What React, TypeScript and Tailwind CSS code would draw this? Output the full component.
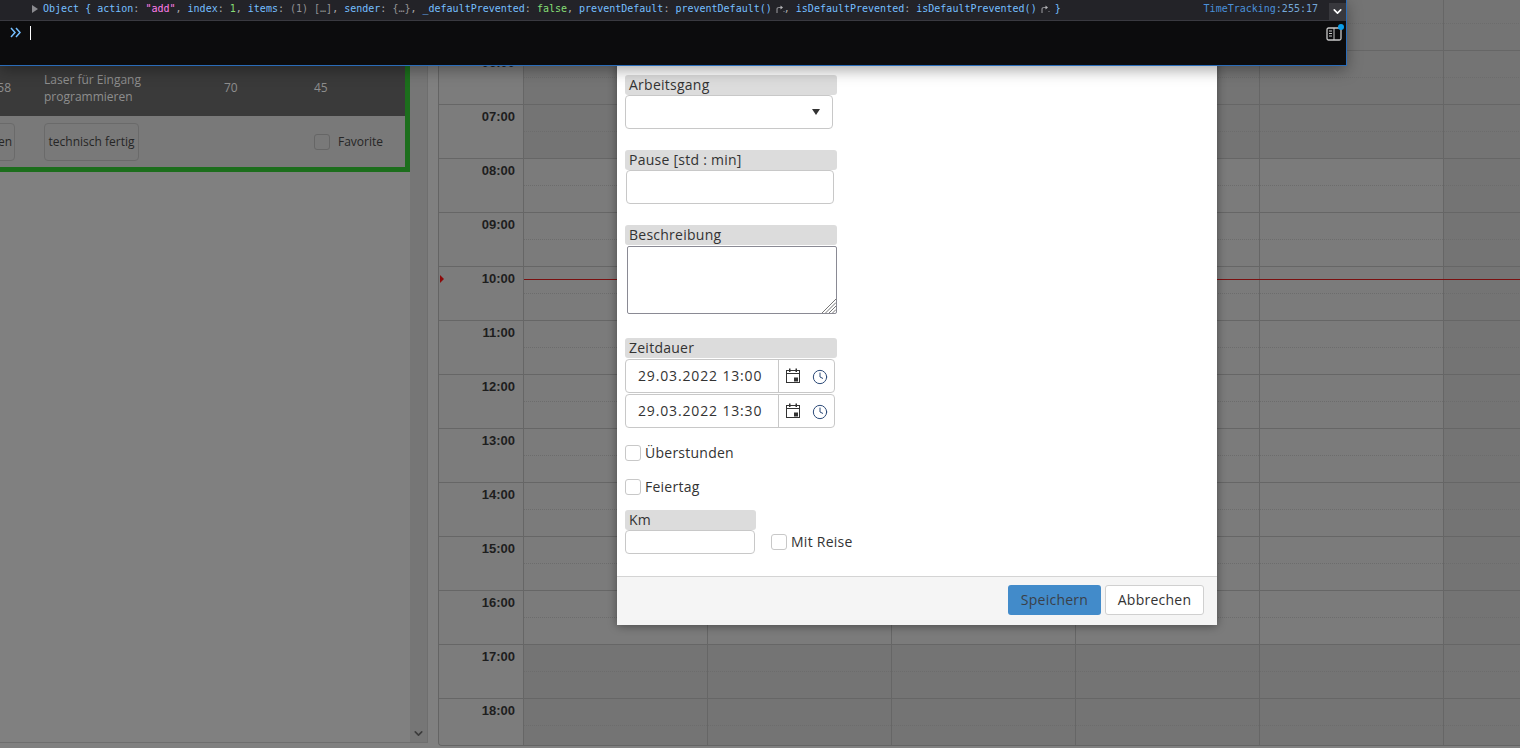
import React from 'react';
import { ChevronDown, Clock } from 'lucide-react';

const hours = ['05:00', '06:00', '07:00', '08:00', '09:00', '10:00', '11:00', '12:00', '13:00', '14:00', '15:00', '16:00', '17:00', '18:00'];
const days = [0, 1, 2, 3, 4, 5];

const labelFont = { fontFamily: '"Open Sans", sans-serif' };

function CalendarIcon() {
  return (
    <svg width="16" height="16" viewBox="0 0 16 16" fill="none" className="text-[#333]">
      <rect x="1.5" y="2.5" width="13" height="12" stroke="currentColor" />
      <path d="M1.5 5.5h13" stroke="currentColor" />
      <rect x="4" y="0.5" width="1.5" height="3.5" fill="currentColor" />
      <rect x="10.5" y="0.5" width="1.5" height="3.5" fill="currentColor" />
      <rect x="9" y="9.5" width="4" height="4" fill="currentColor" />
    </svg>
  );
}

// the little "jump to definition" arrow after functions in the console
function JumpArrow() {
  return (
    <svg width="9" height="9" viewBox="0 0 9 9" fill="none" className="-ml-[2px] -mr-px inline-block align-[-1px]">
      <path d="M1 9V5.5Q1 3.5 3 3.5H5" stroke="#8a8a8f" strokeWidth="1.2" />
      <path d="M4.5 1.5L7 3.5 4.5 5.5z" fill="#b5b5b8" />
      <path d="M8 7v1" stroke="#8a8a8f" />
    </svg>
  );
}

function FieldLabel({ children, width = 'w-[212px]' }: { children: React.ReactNode; width?: string }) {
  return (
    <div className={`${width} h-5 rounded-[3px] bg-[#dcdcdc] pl-1 text-sm leading-5 tracking-[0.25px] text-[#333]`}>
      {children}
    </div>
  );
}

function DateField({ value }: { value: string }) {
  return (
    <div className="flex h-[34px] w-[210px] items-center rounded border border-[#c8c8c8] bg-white">
      <div className="w-[152px] pl-3 text-sm tracking-[0.85px] text-[#333]">{value}</div>
      <div className="flex h-full flex-1 items-center gap-[11px] border-l border-[#c8c8c8] pl-[6px]">
        <CalendarIcon />
        <Clock size={16} strokeWidth={1.5} className="mt-[2px] text-[#2c4a78]" />
      </div>
    </div>
  );
}

function CheckField({ label }: { label: string }) {
  return (
    <label className="flex items-center gap-1 text-sm tracking-[0.25px] text-[#333]">
      <span className="h-4 w-4 rounded-[3px] border border-[#c8c8c8] bg-white" />
      {label}
    </label>
  );
}

function ConsoleBar() {
  return (
    <div className="absolute left-0 top-0 z-20 h-[66px] w-[1347px] border-b border-r border-[#2a6cb8] bg-[#0c0c0d] shadow-[0_4px_14px_rgba(0,0,0,0.35)]">
      <div className="flex h-[21px] items-center border-b border-[#3a3a40] bg-[#232328] pl-[32px] text-[10px] text-[#75bfff]" style={{ fontFamily: '"DejaVu Sans Mono", monospace' }}>
        <svg width="6" height="8" viewBox="0 0 6 8" className="mb-[3px] mr-[5px]"><path d="M0 0l6 4-6 4z" fill="#8a8a8f" /></svg>
        <span className="mb-[3px] whitespace-pre">
          Object {'{'} <span>action</span><span className="text-[#aaa]">:</span> <span className="text-[#ff7de9]">"add"</span><span className="text-[#aaa]">,</span> index<span className="text-[#aaa]">:</span> <span className="text-[#86de74]">1</span><span className="text-[#aaa]">,</span> items<span className="text-[#aaa]">:</span> <span className="text-[#939395]">(1) […]</span><span className="text-[#aaa]">,</span> sender<span className="text-[#aaa]">:</span> <span className="text-[#939395]">{'{…}'}</span><span className="text-[#aaa]">,</span> _defaultPrevented<span className="text-[#aaa]">:</span> <span className="text-[#86de74]">false</span><span className="text-[#aaa]">,</span> preventDefault<span className="text-[#aaa]">:</span> preventDefault() <JumpArrow /><span className="text-[#aaa]">,</span> isDefaultPrevented<span className="text-[#aaa]">:</span> isDefaultPrevented() <JumpArrow /> {'}'}
        </span>
        <span className="mb-[3px] ml-auto mr-[11px] text-[#4a90d9]">TimeTracking<span className="text-[#75a8d8]">:255:17</span></span>
        <div className="mt-[3px] flex h-[17px] w-[17px] items-center justify-center bg-[#38383d]">
          <ChevronDown size={13} strokeWidth={3} className="text-white" />
        </div>
      </div>
      <div className="relative flex h-[44px] pl-[10px] pt-[6px]">
        <svg width="11" height="11" viewBox="0 0 11 11" fill="none" stroke="#75bfff" strokeWidth="1.5">
          <path d="M1 1l4 4.5-4 4.5M6 1l4 4.5-4 4.5" />
        </svg>
        <span className="-mt-[1px] ml-[9px] h-[14px] w-px bg-white" />
        <svg width="16" height="14" viewBox="0 0 16 14" fill="none" className="absolute left-[1326px] top-[6px]">
          <rect x="1" y="1" width="14" height="12" rx="1.5" stroke="#c8c8c8" strokeWidth="1.3" />
          <path d="M8 1v12M3 4h3M3 6.5h3M3 9h3" stroke="#c8c8c8" />
        </svg>
        <span className="absolute left-[1338px] top-[3px] h-[6px] w-[6px] rounded-full bg-[#0a9de8]" />
      </div>
    </div>
  );
}

function Dialog() {
  return (
    <div className="absolute left-[617px] top-0 z-10 flex h-[625px] w-[600px] flex-col rounded-b-[3px] bg-white shadow-[0_1px_10px_rgba(0,0,0,0.4)]" style={labelFont}>
      <div className="flex flex-1 flex-col pl-2 pt-[75px]">
        <FieldLabel>Arbeitsgang</FieldLabel>
        <div className="flex h-[34px] w-[208px] items-center justify-end rounded border border-[#c8c8c8] bg-white pr-[12px]">
          <svg width="8" height="6" viewBox="0 0 8 6"><path d="M0 0h8L4 6z" fill="#333" /></svg>
        </div>

        <div className="mt-[21px]"><FieldLabel>Pause [std : min]</FieldLabel></div>
        <div className="ml-px h-[34px] w-[208px] rounded border border-[#c8c8c8] bg-white" />

        <div className="mt-[21px]"><FieldLabel>Beschreibung</FieldLabel></div>
        <div className="relative ml-[2px] mt-px h-[68px] w-[210px] rounded-[2px] border border-[#8a8a94] bg-white">
          <svg width="14" height="14" viewBox="0 0 14 14" className="absolute bottom-0 right-0" stroke="#777">
            <path d="M0 14L14 0M3.5 14L14 3.5M7 14l7-7M10.5 14l3.5-3.5" />
          </svg>
        </div>

        <div className="mt-[24px]"><FieldLabel>Zeitdauer</FieldLabel></div>
        <div className="mt-px flex flex-col gap-px">
          <DateField value="29.03.2022 13:00" />
          <DateField value="29.03.2022 13:30" />
        </div>

        <div className="mt-[15px]"><CheckField label="Überstunden" /></div>
        <div className="mt-[14px]"><CheckField label="Feiertag" /></div>

        <div className="mt-[13px]"><FieldLabel width="w-[131px]">Km</FieldLabel></div>
        <div className="flex items-center gap-4">
          <div className="h-[24px] w-[130px] rounded border border-[#c8c8c8] bg-white" />
          <CheckField label="Mit Reise" />
        </div>
      </div>
      <div className="flex h-[49px] items-center justify-end gap-1 border-t border-[#d4d4d4] bg-[#f5f5f5] pb-[2px] pr-[13px]">
        <button className="h-[30px] w-[93px] rounded-[3px] bg-[#428bca] text-sm tracking-[0.25px] text-[#3a4048]">Speichern</button>
        <button className="h-[30px] w-[99px] rounded-[3px] border border-[#d0d0d0] bg-white text-sm tracking-[0.25px] text-[#333]">Abbrechen</button>
      </div>
    </div>
  );
}

function LeftPanel() {
  return (
    <div className="flex h-[743px] w-[428px] shrink-0 border-b border-r border-[#6e6e6e]">
      <div className="w-[410px] overflow-hidden">
        <div className="border-b-[5px] border-r-[5px] border-[#1c6e1c] pt-[50px] text-xs text-[#8e8e8e]" style={labelFont}>
          <div className="flex h-[66px] items-center bg-[#3a3a3a] pt-[9px]">
            <span className="w-[11px] overflow-hidden whitespace-nowrap text-[#8e8e8e]" dir="rtl">58</span>
            <span className="ml-[33px] w-[180px] leading-[17px]">Laser für Eingang programmieren</span>
            <span className="w-[90px]">70</span>
            <span>45</span>
          </div>
          <div className="flex h-[51px] items-center bg-[#797979] text-[#262626]">
            <div className="-ml-[10px] flex h-[38px] w-[25px] items-center justify-end rounded-[4px] border border-[#6a6a6a] pr-[2px]">en</div>
            <div className="ml-[29px] flex h-[38px] w-[95px] items-center justify-center rounded-[4px] border border-[#6a6a6a]">technisch fertig</div>
            <span className="ml-[175px] h-4 w-4 rounded-[3px] border border-[#666]" />
            <span className="ml-2">Favorite</span>
          </div>
        </div>
      </div>
      <div className="relative flex-1 bg-[#767676]">
        <ChevronDown size={13} strokeWidth={3} className="absolute bottom-[2px] left-[2px] text-[#3c3c3c]" />
      </div>
    </div>
  );
}

function Scheduler() {
  return (
    <div className="relative ml-[10px] h-[746px] flex-1 overflow-hidden rounded-bl border-b border-l border-[#646464] bg-[#747474]">
      {hours.map((hour, i) => (
        <div key={hour} className={`flex h-[54px] border-b border-[#666] ${i === 0 ? '-mt-[3px]' : ''}`}>
          <div className="w-[85px] shrink-0 border-r border-[#666] bg-[#7c7c7c] pr-[8px] pt-[2px] text-right text-[13px] font-bold text-[#1e1e1e]" style={{ fontFamily: '"Liberation Sans", sans-serif' }}>
            {hour}
          </div>
          {days.map(d => (
            // working hours on weekdays are a bit lighter than the rest
            <div key={d} className={`w-[184px] shrink-0 border-r border-[#666] ${i >= 3 && i <= 11 && d < 5 ? 'bg-[#7b7b7b]' : ''}`}>
              <div className="h-[27px] border-b border-dotted border-[#6c6c6c]" />
            </div>
          ))}
        </div>
      ))}
      <div className="absolute left-[85px] right-0 top-[279px] h-px bg-[#7a1010]" />
      <svg width="4" height="8" viewBox="0 0 4 8" className="absolute left-px top-[275px]"><path d="M0 0l4 4-4 4z" fill="#8c0a0a" /></svg>
    </div>
  );
}

export default function App() {
  return (
    <div className="relative flex h-[748px] w-[1520px] overflow-hidden bg-[#808080]">
      <LeftPanel />
      <Scheduler />
      <Dialog />
      <ConsoleBar />
    </div>
  );
}
